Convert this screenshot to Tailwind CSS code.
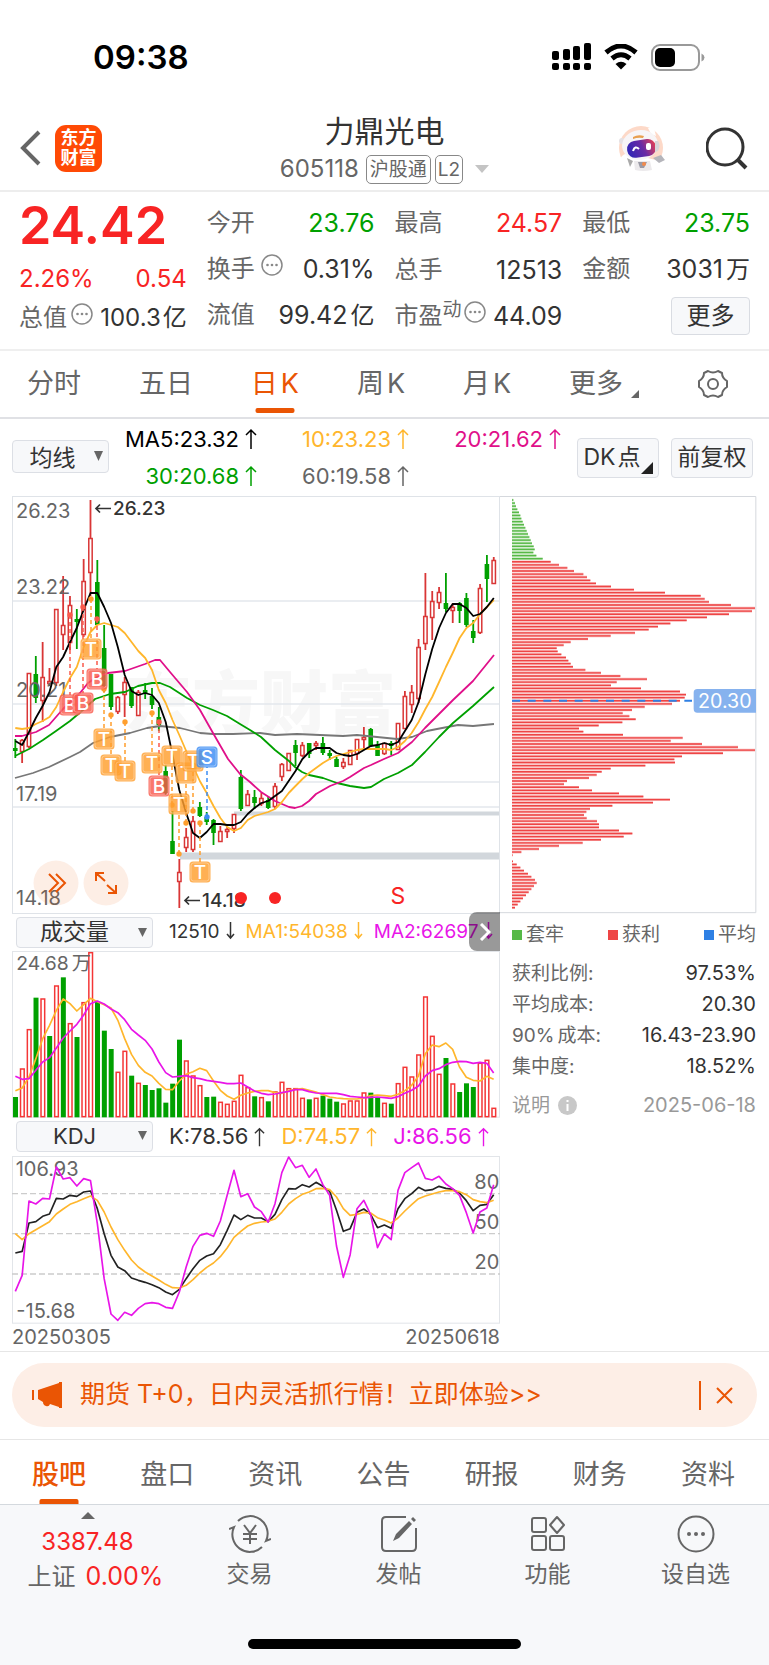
<!DOCTYPE html>
<html lang="zh-CN">
<head>
    <meta charset="UTF-8">
    <meta name="viewport" content="width=device-width, initial-scale=1.0">
    <title>力鼎光电 605118 - 东方财富</title>
    <script src="https://cdn.jsdelivr.net/npm/@tailwindcss/browser@4"></script>
    <style>
        body { font-family: 'Inter', 'Noto Sans CJK SC', sans-serif; }
        select { text-align-last: center; }
    </style>
</head>
<body class="min-h-screen bg-white text-[#333] flex flex-col">

    <!-- Status bar -->
    <div class="h-[106px] pt-2 pl-[93px] pr-[64px] flex items-center justify-between text-black">
        <span class="text-[33px] leading-[40px] font-semibold">09:38</span>
        <div class="flex items-center gap-[13px]">
            <svg class="w-[39px] h-[28px]" viewBox="0 0 39 28">
                <rect x="0" y="8" width="7" height="9" rx="2"/><rect x="11" y="6" width="7" height="11" rx="2"/>
                <rect x="21" y="3" width="7" height="14" rx="2"/><rect x="32" y="0" width="7" height="17" rx="2"/>
                <rect x="0" y="20" width="7" height="7" rx="2"/><rect x="11" y="20" width="7" height="7" rx="2"/>
                <rect x="21" y="20" width="7" height="7" rx="2"/><rect x="32" y="20" width="7" height="7" rx="2"/>
            </svg>
            <svg class="w-[34px] h-[26px]" viewBox="0 0 34 26" fill="none" stroke="#000">
                <path d="M2 8.500Q17 -4.500 32 8.500" stroke-width="5"/>
                <path d="M8 14.500Q17 7 26 14.500" stroke-width="5"/>
                <path d="M17 25.500l-5.500-5.500q5.500-4.500 11 0z" fill="#000" stroke="none"/>
            </svg>
            <svg class="w-[54px] h-[27px]" viewBox="0 0 54 27">
                <rect x="1" y="1" width="47" height="25" rx="8" fill="none" stroke="#999" stroke-width="2"/>
                <rect x="4" y="4" width="20" height="19" rx="5"/>
                <path d="M50.500 9.500q3 1.500 3 4t-3 4z" fill="#999"/>
            </svg>
        </div>
    </div>

    <!-- Header -->
    <header class="h-[84px] px-5 grid grid-cols-[1fr_auto_1fr] items-center">
        <div class="flex items-center gap-[14px]">
            <button type="button" aria-label="返回">
                <svg class="w-[21px] h-[36px]" viewBox="0 0 21 36" fill="none" stroke="#666" stroke-width="4"><path d="M19 2L3 18l16 16"/></svg>
            </button>
            <a href="#" class="w-[47px] h-[47px] rounded-[11px] bg-[#ff4a05] text-white text-[18px] leading-[20px] font-bold text-center flex items-center justify-center"><span>东方<br>财富</span></a>
        </div>
        <div class="flex flex-col items-center">
            <h1 class="text-[30px] leading-[42px]">力鼎光电</h1>
            <div class="flex items-center gap-1 text-[#666]">
                <span class="text-[24px] leading-[34px] pr-[3px]">605118</span>
                <span class="h-[29px] px-[3px] border border-[#888] rounded-[5px] text-[19px] leading-[27px]">沪股通</span>
                <span class="h-[29px] px-[2px] border border-[#888] rounded-[5px] text-[19px] leading-[27px]">L2</span>
                <button type="button" aria-label="切换" class="pl-2"><svg class="w-[14px] h-[8px]" viewBox="0 0 14 8"><path d="M0 0h14L7 8z" fill="#c4c4c4"/></svg></button>
            </div>
        </div>
        <div class="flex items-center justify-end gap-[41px]">
            <button type="button" aria-label="智能助手">
                <svg class="w-[46px] h-[46px]" viewBox="0 0 46 46">
                    <defs><linearGradient id="visor" x1="0" y1=".3" x2="1" y2=".1"><stop offset="0" stop-color="#3527b5"/><stop offset=".5" stop-color="#6a2aa4"/><stop offset="1" stop-color="#f0434e"/></linearGradient></defs>
                    <circle cx="22" cy="23" r="22" fill="#fdd9c8"/>
                    <path d="M8 28q-10 4-5 12l8 6h22l8-10z" fill="#fff"/>
                    <path d="M15 36h16l2 9q-9 2-17 0z" fill="#eceaec"/><path d="M19 37h9l-3 6h-4z" fill="#9a9aa5"/>
                    <circle cx="25" cy="39" r="2" fill="#f28a4c"/><path d="M8 33l6 3-3 6z" fill="#aaa"/>
                    <path d="M34 33l8-3 4 5-6 3z" fill="#b5b5bb"/>
                    <path d="M29 3l6 0 2 8-5-2z" fill="#fff"/><circle cx="3" cy="16" r="3" fill="#e5e1e4"/>
                    <ellipse cx="21" cy="20" rx="18" ry="15" fill="#f7f5f7" transform="rotate(-8 21 20)"/>
                    <path d="M14 12q5-3 11-1l-1 2q-5-1-10 1z" fill="#e8a050"/>
                    <rect x="8" y="15" width="29" height="17" rx="8" fill="url(#visor)" transform="rotate(-8 22 23)"/>
                    <path d="M14 26q2-6 6-2" fill="none" stroke="#fff" stroke-width="2"/><rect x="27" y="18" width="5" height="7" rx="2" fill="#fff"/>
                    <path d="M39 16q3 4 0 10l-3 1V16z" fill="#d8d5d9"/>
                </svg>
            </button>
            <button type="button" aria-label="搜索">
                <svg class="w-[43px] h-[43px]" viewBox="0 0 43 43" fill="none" stroke="#333" stroke-width="3"><circle cx="19" cy="20" r="18"/><path d="M31 32l9 9" stroke-width="4"/></svg>
            </button>
        </div>
    </header>

    <!-- Quote -->
    <section class="h-[159px] px-[19px] pt-2 pb-[10px] border-t-2 border-[#ededed] grid grid-cols-4 gap-x-5 text-[24px] text-[#333]">
        <div class="flex flex-col justify-between">
            <div class="text-[52px] leading-[52px] font-semibold text-[#f82424]">24.42</div>
            <div class="flex justify-between pt-2 leading-[36px] text-[#f82424]"><span>2.26%</span><span>0.54</span></div>
            <div class="flex justify-between items-center leading-[42px] whitespace-nowrap"><span class="flex items-center gap-1 text-[#666]">总值<svg class="w-[22px] h-[22px] mb-2" viewBox="0 0 22 22"><circle cx="11" cy="11" r="10" fill="none" stroke="#888" stroke-width="1.500"/><g fill="#888"><circle cx="6.500" cy="11" r="1.300"/><circle cx="11" cy="11" r="1.300"/><circle cx="15.500" cy="11" r="1.300"/></g></svg></span><span>100.3<span class="ml-[2px]">亿</span></span></div>
        </div>
        <div class="flex flex-col justify-between leading-[46px]">
            <div class="flex justify-between"><span class="text-[#666]">今开</span><span class="text-[25px] text-[#00a000]">23.76</span></div>
            <div class="flex justify-between"><span class="flex items-center gap-[6px] text-[#666]">换手<svg class="w-[22px] h-[22px] mb-2" viewBox="0 0 22 22"><circle cx="11" cy="11" r="10" fill="none" stroke="#888" stroke-width="1.500"/><g fill="#888"><circle cx="6.500" cy="11" r="1.300"/><circle cx="11" cy="11" r="1.300"/><circle cx="15.500" cy="11" r="1.300"/></g></svg></span><span class="text-[25px]">0.31%</span></div>
            <div class="flex justify-between"><span class="text-[#666]">流值</span><span class="text-[25px]">99.42<span class="ml-[3px] text-[24px]">亿</span></span></div>
        </div>
        <div class="flex flex-col justify-between leading-[46px]">
            <div class="flex justify-between"><span class="text-[#666]">最高</span><span class="text-[25px] text-[#f82424]">24.57</span></div>
            <div class="flex justify-between"><span class="text-[#666]">总手</span><span class="text-[25px]">12513</span></div>
            <div class="flex justify-between whitespace-nowrap"><span class="flex items-center text-[#666]">市盈<span class="text-[19px] leading-[24px] mb-3">动</span><svg class="w-[22px] h-[22px] mb-2 ml-[2px]" viewBox="0 0 22 22"><circle cx="11" cy="11" r="10" fill="none" stroke="#888" stroke-width="1.500"/><g fill="#888"><circle cx="6.500" cy="11" r="1.300"/><circle cx="11" cy="11" r="1.300"/><circle cx="15.500" cy="11" r="1.300"/></g></svg></span><span class="text-[25px]">44.09</span></div>
        </div>
        <div class="flex flex-col justify-between leading-[46px]">
            <div class="flex justify-between"><span class="text-[#666]">最低</span><span class="text-[25px] text-[#00a000]">23.75</span></div>
            <div class="flex justify-between"><span class="text-[#666]">金额</span><span class="text-[25px]">3031<span class="ml-[3px] text-[24px]">万</span></span></div>
            <div class="flex justify-end items-center h-[46px]"><button type="button" class="w-[79px] h-[38px] border border-[#d9dce2] rounded-[4px] bg-[#f7f8fa] leading-[34px]">更多</button></div>
        </div>
    </section>

    <!-- Period tabs -->
    <nav class="h-[70px] pl-[27px] pr-10 border-t-2 border-b-2 border-t-[#efefef] border-b-[#e0e1e5] flex items-stretch justify-between text-[27px] leading-[66px] text-[#666]">
        <a href="#">分时</a>
        <a href="#">五日</a>
        <a href="#" class="relative text-[#ea5504]">日<span class="ml-[3px]">K</span><i class="absolute left-1/2 -translate-x-1/2 bottom-1 w-[39px] h-[5px] rounded-[2px] bg-[#ea5504]"></i></a>
        <a href="#">周<span class="ml-[3px]">K</span></a>
        <a href="#">月<span class="ml-[3px]">K</span></a>
        <a href="#" class="flex items-center gap-2">更多<svg class="w-[8px] h-[8px] mt-5" viewBox="0 0 8 8"><path d="M8 0v8H0z" fill="#666"/></svg></a>
        <button type="button" aria-label="设置">
            <svg class="w-[32px] h-[32px]" viewBox="0 0 32 32" fill="none" stroke="#666" stroke-width="2" stroke-linejoin="round"><path d="M11 3Q16 6 21 3L25 5Q25 10 30 13V19Q25 22 25 27L21 29Q16 26 11 29L7 27Q7 22 2 19V13Q7 10 7 5Z"/><circle cx="16" cy="16" r="5"/></svg>
        </button>
    </nav>

    <!-- Moving averages -->
    <div class="h-[77px] mx-3 flex items-center justify-between text-[23px] whitespace-nowrap">
        <div class="relative">
            <select aria-label="主图指标" class="appearance-none w-[97px] h-[33px] pl-1 pr-5 border border-[#dcdfe5] rounded-[4px] bg-[#f7f8fa]"><option>均线</option></select>
            <svg class="absolute right-[6px] top-[11px] w-[9px] h-[10px] pointer-events-none" viewBox="0 0 9 10"><path d="M0 0h9L4.500 10z" fill="#666"/></svg>
        </div>
        <div class="grid grid-cols-[auto_152px_152px] text-right text-[22px] leading-[37px]">
            <span class="text-black">MA5:23.32<svg class="inline w-[12px] h-[21px] ml-[6px] mb-1" viewBox="0 0 12 21" fill="none" stroke="currentColor" stroke-width="1.500"><path d="M6 21V2M1 7l5-5 5 5"/></svg></span>
            <span class="text-[#ffb62c]">10:23.23<svg class="inline w-[12px] h-[21px] ml-[6px] mb-1" viewBox="0 0 12 21" fill="none" stroke="currentColor" stroke-width="1.500"><path d="M6 21V2M1 7l5-5 5 5"/></svg></span>
            <span class="text-[#e0108a]">20:21.62<svg class="inline w-[12px] h-[21px] ml-[6px] mb-1" viewBox="0 0 12 21" fill="none" stroke="currentColor" stroke-width="1.500"><path d="M6 21V2M1 7l5-5 5 5"/></svg></span>
            <span class="text-[#00a000]">30:20.68<svg class="inline w-[12px] h-[21px] ml-[6px] mb-1" viewBox="0 0 12 21" fill="none" stroke="currentColor" stroke-width="1.500"><path d="M6 21V2M1 7l5-5 5 5"/></svg></span>
            <span class="text-[#666]">60:19.58<svg class="inline w-[12px] h-[21px] ml-[6px] mb-1" viewBox="0 0 12 21" fill="none" stroke="currentColor" stroke-width="1.500"><path d="M6 21V2M1 7l5-5 5 5"/></svg></span>
        </div>
        <div class="flex gap-3 pr-1">
            <button type="button" class="relative w-[82px] h-[40px] pr-3 border border-[#dcdfe5] rounded-[4px] bg-[#f7f8fa]">DK<span class="ml-[2px]">点</span><svg class="absolute right-[5px] bottom-[3px] w-[12px] h-[12px]" viewBox="0 0 12 12"><path d="M12 0v12H0z" fill="#222"/></svg></button>
            <button type="button" class="w-[82px] h-[40px] border border-[#dcdfe5] rounded-[4px] bg-[#f7f8fa]">前复权</button>
        </div>
    </div>

    <main class="mx-3 grid grid-cols-[488fr_257fr]">
        <div class="min-w-0">
            <!-- Candles, 488 x 418 -->
            <svg id="kline" class="block w-full h-auto" viewBox="0 0 488 418"></svg>

            <div class="h-[37px] relative pl-1 flex items-center text-[19px] whitespace-nowrap">
                <div class="relative mr-4">
                    <select aria-label="副图一指标" class="appearance-none w-[137px] h-[31px] pl-1 pr-6 border border-[#dcdfe5] rounded-[4px] bg-[#f7f8fa] text-[23px] leading-[28px]"><option>成交量</option></select>
                    <svg class="absolute right-[6px] top-[11px] w-[9px] h-[9px] pointer-events-none" viewBox="0 0 9 9"><path d="M0 0h9L4.500 9z" fill="#666"/></svg>
                </div>
                <span class="mr-[11px]">12510<svg class="inline w-[9px] h-[18px] ml-[6px] mb-1" viewBox="0 0 9 18" fill="none" stroke="currentColor" stroke-width="1.500"><path d="M4.500 0v16M1 12l3.500 4L8 12"/></svg></span>
                <span class="mr-[11px] text-[#ffb62c]">MA1:54038<svg class="inline w-[9px] h-[18px] ml-[6px] mb-1" viewBox="0 0 9 18" fill="none" stroke="currentColor" stroke-width="1.500"><path d="M4.500 0v16M1 12l3.500 4L8 12"/></svg></span>
                <span class="text-[#e815e8]">MA2:62697<svg class="inline w-[9px] h-[18px] ml-[6px] mb-1" viewBox="0 0 9 18" fill="none" stroke="currentColor" stroke-width="1.500"><path d="M4.500 0v16M1 12l3.500 4L8 12"/></svg></span>
                <button type="button" aria-label="展开" class="absolute right-0 -top-[2px] w-[31px] h-[39px] rounded-l-[8px] bg-black/40 flex items-center justify-center">
                    <svg class="w-[12px] h-[18px]" viewBox="0 0 12 18" fill="none" stroke="#fff" stroke-width="3"><path d="M2 1l8 8-8 8"/></svg>
                </button>
            </div>
            <svg id="volume" class="block w-full h-auto" viewBox="36 122 1464 500"></svg>

            <div class="h-[38px] pl-1 flex items-center text-[22px] whitespace-nowrap">
                <div class="relative mr-4">
                    <select aria-label="副图二指标" class="appearance-none w-[137px] h-[31px] pl-1 pr-6 border border-[#dcdfe5] rounded-[4px] bg-[#f7f8fa] leading-[28px]"><option>KDJ</option></select>
                    <svg class="absolute right-[6px] top-[11px] w-[9px] h-[9px] pointer-events-none" viewBox="0 0 9 9"><path d="M0 0h9L4.500 9z" fill="#666"/></svg>
                </div>
                <span class="mr-4">K:78.56<svg class="inline w-[11px] h-[21px] ml-[6px] mb-1" viewBox="0 0 12 21" fill="none" stroke="currentColor" stroke-width="1.500"><path d="M6 21V2M1 7l5-5 5 5"/></svg></span>
                <span class="mr-4 text-[#ffb62c]">D:74.57<svg class="inline w-[11px] h-[21px] ml-[6px] mb-1" viewBox="0 0 12 21" fill="none" stroke="currentColor" stroke-width="1.500"><path d="M6 21V2M1 7l5-5 5 5"/></svg></span>
                <span class="text-[#e815e8]">J:86.56<svg class="inline w-[11px] h-[21px] ml-[6px] mb-1" viewBox="0 0 12 21" fill="none" stroke="currentColor" stroke-width="1.500"><path d="M6 21V2M1 7l5-5 5 5"/></svg></span>
            </div>
            <svg id="kdj" class="block w-full h-auto" viewBox="36 122 1464 504"></svg>
            <div class="h-[27px] flex justify-between items-center text-[20px] leading-[24px] text-[#666]"><span>20250305</span><span>20250618</span></div>
        </div>

        <aside class="min-w-0">
            <!-- Chip distribution -->
            <svg id="chips" class="block w-full h-auto" viewBox="0 18 771 1254"></svg>
            <div class="pl-3 pr-[1px] pt-[3px] text-[19px] text-[#666]">
                <ul class="h-[36px] flex justify-between items-center">
                    <li class="flex items-center gap-1"><i class="w-[10px] h-[10px] bg-[#57b947]"></i>套牢</li>
                    <li class="flex items-center gap-1"><i class="w-[10px] h-[10px] bg-[#ee4545]"></i>获利</li>
                    <li class="flex items-center gap-1"><i class="w-[10px] h-[10px] bg-[#2f80e4]"></i>平均</li>
                </ul>
                <dl class="pt-[5px] grid grid-cols-[auto_1fr] leading-[31px] whitespace-nowrap">
                    <dt>获利比例:</dt><dd class="text-right text-[20px] text-[#333]">97.53%</dd>
                    <dt>平均成本:</dt><dd class="text-right text-[20px] text-[#333]">20.30</dd>
                    <dt>90%<span class="ml-[3px]">成本:</span></dt><dd class="text-right text-[20px] text-[#333]">16.43-23.90</dd>
                    <dt>集中度:</dt><dd class="text-right text-[20px] text-[#333]">18.52%</dd>
                </dl>
                <div class="pt-2 flex justify-between leading-[31px] text-[#999]">
                    <a href="#" class="flex items-center gap-2">说明<svg class="w-[19px] h-[19px]" viewBox="0 0 19 19"><circle cx="9.500" cy="9.500" r="9.500" fill="#c8c8c8"/><path d="M8.500 4h2v2h-2zM8.500 8h2v7h-2z" fill="#fff"/></svg></a>
                    <span class="text-[20px]">2025-06-18</span>
                </div>
            </div>
        </aside>
    </main>

    <!-- Promo -->
    <div class="h-[89px] px-3 border-t border-b border-[#e6e6e6] flex items-center">
        <div class="w-full h-[64px] pl-5 pr-6 rounded-full bg-[#fdeee6] text-[#ea5504] text-[25px] flex items-center justify-between">
            <a href="#" class="flex items-center gap-[18px]">
                <svg class="w-[30px] h-[26px]" viewBox="0 0 30 26" fill="#ea5504"><path d="M0 8h2v10H0zM6 8L27 1V0h3v26h-3v-1l-9-3q-1 3-4 2t-3-4l-5-3z"/></svg>
                <span>期货 T+0，日内灵活抓行情！立即体验&gt;&gt;</span>
            </a>
            <div class="flex items-center gap-[15px]">
                <i class="w-[2px] h-[29px] bg-[#ea5504]"></i>
                <button type="button" aria-label="关闭"><svg class="w-[17px] h-[17px]" viewBox="0 0 17 17" fill="none" stroke="#ea5504" stroke-width="2"><path d="M1 1l15 15M16 1L1 16"/></svg></button>
            </div>
        </div>
    </div>

    <!-- Content tabs -->
    <nav class="h-[64px] pl-8 pr-[34px] flex justify-between text-[27px] leading-[70px] text-[#666]">
        <a href="#" class="relative text-[#ea5504] font-medium">股吧<i class="absolute left-1/2 -translate-x-1/2 bottom-0 w-[39px] h-[5px] rounded-t-[2px] bg-[#ea5504]"></i></a>
        <a href="#">盘口</a>
        <a href="#">资讯</a>
        <a href="#">公告</a>
        <a href="#">研报</a>
        <a href="#">财务</a>
        <a href="#">资料</a>
    </nav>

    <!-- Bottom bar -->
    <footer class="grow border-t border-[#d4d9de] bg-[#f7f8fa] flex flex-col justify-between text-[23px] text-[#666]">
        <div class="grid grid-cols-[175fr_149fr_149fr_149fr_147fr] text-center">
            <a href="#" class="pt-[7px] leading-[35px]">
                <svg class="block mx-auto w-[14px] h-[7px]" viewBox="0 0 14 7"><path d="M7 0l7 7H0z" fill="#666"/></svg>
                <span class="block mt-[5px] text-[24px] text-[#f82424]">3387.48</span>
                <span class="block pl-4 text-[24px]">上证<span class="ml-[10px] text-[25px] text-[#f82424]">0.00%</span></span>
            </a>
            <a href="#" class="pt-[10px] leading-[38px]">
                <svg class="block mx-auto w-[42px] h-[38px] mb-[2px]" viewBox="0 0 42 38" fill="none" stroke="#666" stroke-width="2"><path d="M9 6A17.500 17.500 0 0 1 37 26l5-2M33 32A17.500 17.500 0 0 1 5 12l-5 2"/><path d="M15 10l6 8 6-8M14 19h14M14 24h14M21 18v11"/></svg>交易</a>
            <a href="#" class="pt-[10px] leading-[38px]">
                <svg class="block mx-auto w-[36px] h-[38px] mb-[2px]" viewBox="0 0 36 38" fill="none" stroke="#666" stroke-width="2"><path d="M25 2H5Q1 2 1 6v26q0 4 4 4h26q4 0 4-4V13"/><path d="M12 26l3-7L28 6l3 3-13 14zM30 4l2-2 3 3-2 2z" fill="#666" stroke="none"/></svg>发帖</a>
            <a href="#" class="pt-[10px] leading-[38px]">
                <svg class="block mx-auto w-[34px] h-[38px] mb-[2px]" viewBox="0 0 34 38" fill="none" stroke="#666" stroke-width="2"><rect x="1" y="3" width="14" height="14" rx="2"/><rect x="1" y="21" width="14" height="14" rx="2"/><rect x="19" y="21" width="14" height="14" rx="2"/><path d="M26 2l7 8-7 8-7-8z" stroke-linejoin="round"/></svg>功能</a>
            <a href="#" class="pt-[10px] leading-[38px]">
                <svg class="block mx-auto w-[38px] h-[38px] mb-[2px]" viewBox="0 0 38 38" fill="none" stroke="#666" stroke-width="2"><circle cx="19" cy="19" r="17.500"/><g fill="#666" stroke="none"><circle cx="12" cy="19" r="2"/><circle cx="19" cy="19" r="2"/><circle cx="26" cy="19" r="2"/></g></svg>设自选</a>
        </div>
        <div class="mx-auto mb-4 w-[273px] h-[10px] rounded-full bg-black"></div>
    </footer>

    <script>
        const RED = '#d93636', GREEN = '#00a000', ORANGE = '#ffb62c', PINK = '#e0108a', PURPLE = '#e815e8';

        // [direction, high, body top, body bottom, low]
        const candles = [
            ['g',243,252,255,262],['r',243,244,256,267],['r',177,177,251,252],['g',160,178,202,207],['r',146,181,205,226],['r',172,185,188,190],
            ['r',113,113,187,190],['r',80,129,139,154],['r',100,109,147,154],['g',113,123,126,153],['r',63,85,139,141],['r',4,42,77,100],
            ['g',64,86,129,129],['g',129,152,190,196],['g',178,178,211,214],['r',200,201,216,218],['r',181,186,199,221],['g',191,191,210,212],
            ['r',194,196,220,220],['g',187,194,197,203],['g',192,200,209,213],['g',211,221,229,235],['g',269,275,297,299],['g',315,345,358,358],
            ['r',363,376,386,412],['r',332,341,352,356],['r',320,325,354,356],['g',306,311,320,321],['g',316,321,326,329],['g',323,324,337,349],
            ['r',330,335,346,346],['r',331,333,336,342],['r',318,318,333,337],['g',274,281,313,315],['r',294,298,310,310],['g',294,301,307,313],
            ['r',297,302,308,310],['g',300,304,312,313],['r',287,290,311,313],['r',267,268,281,285],['r',257,257,275,275],['g',244,249,257,270],
            ['r',246,249,260,261],['g',247,247,258,262],['r',245,247,250,254],['g',241,247,257,259],['g',254,257,260,264],['g',261,263,271,271],
            ['r',262,266,271,273],['r',254,254,269,269],['r',243,243,258,264],['r',231,241,244,254],['g',232,233,250,251],['g',245,249,260,260],
            ['r',247,247,258,259],['g',245,247,250,259],['r',227,227,254,254],['r',195,200,233,233],['r',189,196,209,217],['r',143,151,203,207],
            ['r',77,120,148,154],['r',95,105,122,144],['r',91,96,107,113],['g',77,107,113,116],['r',107,111,115,127],['g',106,107,115,127],
            ['g',97,102,129,131],['g',124,135,142,147],['r',88,92,137,138],['g',59,68,83,106],['r',61,64,88,88]
        ];
        const ma5 = [245,249,236,222,210,196,171,161,146,132,114,97,97,111,127,151,179,195,199,197,199,207,226,259,294,317,337,342,336,328,328,329,329,326,318,312,307,305,300,295,285,275,263,256,252,252,252,257,259,260,258,254,250,249,247,249,246,235,224,206,178,153,132,117,108,108,112,120,118,111,102];
        const ma10 = [232,233,232,228,225,221,211,196,182,171,151,136,129,127,129,131,137,146,155,162,174,194,207,224,239,255,270,285,297,310,322,331,335,332,324,320,318,316,313,306,297,290,283,277,272,267,263,260,258,256,254,253,253,253,253,254,251,245,237,226,213,201,186,171,157,142,132,127,118,111,104];
        const ma20 = '3,240 10,240 24,236 37,229 44,221 51,213 60,204 68,197 76,187 85,181 96,177 113,175 133,168 143,164 148,164 158,176 175,196 188,214 201,237 216,263 228,278 238,286 249,296 263,305 277,311 283,312 290,310 297,305 304,298 318,290 331,285 338,281 352,272 359,269 372,263 386,257 400,246 413,232 427,218 441,204 461,185 482,159';
        const ma30 = '3,260 17,253 31,244 44,235 58,225 71,214 83,203 98,198 113,196 126,190 140,187 148,187 158,191 175,202 188,209 201,214 215,220 228,228 238,234 249,241 263,254 277,265 283,271 290,276 297,279 311,282 325,287 338,290 352,292 359,291 372,283 386,277 400,269 413,256 427,241 441,227 461,210 482,191';
        const ma60 = '3,282 21,277 37,271 58,261 68,256 81,247 98,241 118,237 135,232 148,230 168,232 188,237 201,238 221,238 248,237 263,239 285,238 331,240 345,239 365,241 385,243 400,241 415,235 425,233 446,229 461,230 482,228';

        // trade marks: [label, x, y, dot y]
        const marks = [
            ['T',79,153,103],['B',85,183,123],['B',58,209,119],['B',71,207,111],['T',92,243,193],['T',99,269,219],['T',113,275,226],
            ['T',140,267,217],['B',147,290,226],['T',160,260,309],['T',174,277,327],['T',181,265,315],['T',167,308,358],['S',195,261,321],['T',188,376,327]
        ];
        const markColor = { T: '#ff9f2e', B: '#fa5a4c', S: '#3d8df5' };

        // lower panes are plotted at 3x, one column every 20.5 units
        const volume = 'g560 r474 r356 g262 r264 g377 r225 g201 r338 g380 r275 r125 g275 g361 g416 r484 r421 g496 r517 g524 g539 g534 g577 g520 g388 r450 r495 r524 g560 g559 r574 r580 r571 r493 r530 g558 r560 g573 r543 r514 r533 r533 r562 g567 r562 g556 g565 g574 r579 r570 r570 r546 g547 g561 r577 g580 r518 r469 r498 r432 r258 r376 r490 g443 r519 g545 g519 g530 r457 r448 r592'.split(' ');
        const volMa1 = [541,533,500,445,385,345,300,266,280,302,283,264,274,283,293,330,385,432,465,486,497,519,537,538,512,492,484,474,481,512,540,557,567,555,548,543,541,541,547,549,541,537,535,540,545,553,560,563,565,566,566,563,556,554,556,558,552,541,525,497,430,404,409,398,417,470,501,510,512,498,507];
        const volMa2 = [498,507,505,480,455,442,413,383,362,342,314,280,272,281,296,307,328,357,374,390,416,455,487,500,498,496,502,505,510,513,516,520,520,518,530,542,549,553,551,547,543,538,538,544,548,549,549,549,553,558,560,562,561,560,562,564,559,549,540,527,497,481,475,463,456,453,454,459,456,459,488];
        const k = [413,408,323,319,303,296,249,251,240,243,230,227,280,355,420,455,466,488,495,501,508,517,530,538,522,490,460,435,422,415,388,345,299,313,300,308,308,319,297,253,220,221,208,215,201,213,228,285,348,340,291,281,297,337,329,339,280,250,235,216,226,223,213,219,222,233,256,286,270,267,238];
        const d = [355,373,355,343,331,319,296,281,267,259,250,242,255,290,335,373,405,434,455,470,482,494,507,517,518,510,493,473,456,443,424,398,366,348,332,324,320,318,311,291,266,250,237,230,220,219,223,245,280,300,297,291,293,307,314,323,308,287,268,250,242,236,230,226,226,229,238,253,259,262,255];
        const j = [528,480,257,266,249,251,155,191,187,212,190,196,325,490,596,615,591,600,579,565,562,565,576,579,530,455,393,360,354,363,317,240,165,244,235,275,289,320,265,172,125,157,150,186,161,208,240,392,486,418,280,255,298,397,356,373,225,172,157,143,189,194,183,206,220,240,292,353,290,278,208];
        const chips = [40,45,48,52,57,61,64,68,72,76,80,84,88,92,96,101,104,100,109,128,152,177,202,222,250,261,271,288,333,402,495,602,614,627,693,765,756,687,621,560,511,474,446,405,332,264,212,191,170,173,184,198,205,212,219,256,303,361,441,350,333,423,540,558,554,540,516,434,396,368,388,407,367,296,237,250,369,548,512,606,714,765,669,546,523,525,436,332,305,290,267,201,192,237,276,357,430,510,459,337,270,259,252,260,291,297,297,357,397,371,303,248,177,117,64,38,36,39,50,61,72,84,94,105,110,102,94,86,78,69,61,53,45];

        const line = (pts, color, w) => `<polyline points="${pts}" fill="none" stroke="${color}" stroke-width="${w}" stroke-linejoin="round"/>`;
        const series = (values, x0, step) => values.map((v, i) => `${(x0 + step * i).toFixed(1)},${v}`).join(' ');

        function drawKline() {
            let s = `<text x="112" y="232" font-size="68" font-weight="900" fill="#f7f7f7">东方财富</text>`;
            s += `<path d="M0 105H488M0 208H488M0 311H488M232 286H488" stroke="#e4e8ed" stroke-width="1.500"/>`;
            s += `<path d="M222 317.500H488" stroke="#d2d7dc" stroke-width="4"/><path d="M168 360H488" stroke="#d2d7dc" stroke-width="7"/>`;
            candles.forEach(([dir, hi, top, bot, lo], i) => {
                const x = 3.3 + 6.835 * i;
                if (dir === 'g') {
                    s += `<path d="M${x} ${hi}V${lo}" stroke="${GREEN}" stroke-width="1.800"/><rect x="${x - 2.3}" y="${top}" width="4.600" height="${bot - top}" fill="${GREEN}"/>`;
                } else {
                    s += `<path d="M${x} ${hi}V${top}M${x} ${bot}V${lo}" stroke="${RED}" stroke-width="1.800"/><rect x="${x - 1.7}" y="${top + .5}" width="3.400" height="${Math.max(bot - top - 1, 1)}" fill="#fff" stroke="${RED}" stroke-width="1.500"/>`;
                }
            });
            s += `<g font-size="20" fill="#666"><text x="4" y="22">26.23</text><text x="4" y="98">23.22</text><text x="4" y="201">20.21</text><text x="4" y="305">17.19</text><text x="4" y="409">14.18</text></g>`;
            s += line(ma60, '#777', 1.8) + line(ma30, GREEN, 1.8) + line(ma20, PINK, 1.8);
            s += line(series(ma10, 3.3, 6.835), ORANGE, 1.8) + line(series(ma5, 3.3, 6.835), '#000', 1.8);
            marks.forEach(([t, x, y, dot]) => {
                const c = markColor[t];
                s += `<path d="M${x} ${dot}V${y + (dot > y ? 10 : -10)}" stroke="${c}" stroke-width="1.500" stroke-dasharray="4 3"/><circle cx="${x}" cy="${dot}" r="2.700" fill="${c}"/>`;
            });
            marks.forEach(([t, x, y]) => {
                s += `<g opacity=".82"><rect x="${x - 10.5}" y="${y - 10.5}" width="21" height="21" rx="3.500" fill="${markColor[t]}"/><rect x="${x - 9}" y="${y - 9}" width="18" height="18" rx="2.500" fill="none" stroke="#fff" stroke-opacity=".35"/></g><text x="${x}" y="${y + 7}" font-size="19" font-weight="500" fill="#fff" text-anchor="middle">${t}</text>`;
            });
            s += `<g font-size="19" font-weight="500" fill="#333"><text x="101" y="19">26.23</text><text x="190" y="411">14.18</text></g>`;
            s += `<path d="M84 12.500H99M88 8.500l-4 4 4 4M173 404.500H188M177 400.500l-4 4 4 4" fill="none" stroke="#333" stroke-width="1.700"/>`;
            s += `<circle cx="229" cy="402" r="6" fill="#f82424"/><circle cx="263" cy="402" r="6" fill="#f82424"/><text x="386" y="408" font-size="23" fill="#f82424" text-anchor="middle">S</text>`;
            s += `<circle cx="44" cy="387" r="22.500" fill="#ea5504" fill-opacity=".1"/><circle cx="94" cy="387" r="22.500" fill="#ea5504" fill-opacity=".1"/>`;
            s += `<path d="M37 378l9 9-9 9M44 378l9 9-9 9M84 385v-8h8M84 377l9 8M104 389v8h-8M104 397l-9-8" fill="none" stroke="#ea5504" stroke-width="2"/>`;
            s += `<rect x=".5" y=".5" width="487" height="417" fill="none" stroke="#dfe3e8"/>`;
            document.getElementById('kline').innerHTML = s;
        }

        function drawVolume() {
            let s = `<rect x="37.500" y="123.500" width="1461" height="497" fill="none" stroke="#e2e5e9" stroke-width="3"/>`;
            volume.forEach((v, i) => {
                const x = 46 + 20.5 * i, top = +v.slice(1);
                s += v[0] === 'g'
                    ? `<rect x="${x - 7}" y="${top}" width="15" height="${621 - top}" fill="${GREEN}"/>`
                    : `<rect x="${x - 5}" y="${top + 2}" width="11" height="${617 - top}" fill="#fff" stroke="#f43636" stroke-width="4.500"/>`;
            });
            s += `<text x="49" y="180" font-size="58" fill="#666">24.68<tspan dx="9">万</tspan></text>`;
            s += line(series(volMa1, 46, 20.5), ORANGE, 5) + line(series(volMa2, 46, 20.5), PURPLE, 5);
            document.getElementById('volume').innerHTML = s;
        }

        function drawKdj() {
            let s = `<rect x="37.500" y="123.500" width="1461" height="500" fill="none" stroke="#e2e5e9" stroke-width="3"/>`;
            s += `<path d="M36 235H1500M36 355H1500M36 476H1500" stroke="#ccc" stroke-width="4" stroke-dasharray="18 9"/>`;
            s += `<g font-size="60" fill="#666"><text x="47" y="181">106.93</text><text x="49" y="608">-15.68</text><g text-anchor="end"><text x="1498" y="222">80</text><text x="1498" y="342">50</text><text x="1498" y="462">20</text></g></g>`;
            s += line(series(k, 46, 20.5), '#222', 5) + line(series(d, 46, 20.5), ORANGE, 5) + line(series(j, 46, 20.5), PURPLE, 5);
            document.getElementById('kdj').innerHTML = s;
        }

        function drawChips() {
            let s = `<path d="M0 19.500H767.500V1268H0" fill="none" stroke="#d5d8dd" stroke-width="3"/>`;
            const step = 1223 / (chips.length - 1);
            chips.forEach((x, i) => {
                const y = (30 + step * i).toFixed(1);
                const c = i < 20 ? '#57b947' : '#ee4545';
                s += `<path d="M36 ${y}H${x}" stroke="${c}" stroke-width="8" stroke-opacity=".4"/><path d="M36 ${y}H${x}" stroke="${c}" stroke-width="4"/>`;
            });
            s += `<path d="M36 632H576" stroke="#2f80e4" stroke-width="6" stroke-dasharray="24 23"/>`;
            s += `<path d="M592 597H768V668H592Q581 668 581 657V608Q581 597 592 597Z" fill="#86b2ee"/><text x="594" y="654" font-size="59" fill="#fff">20.30</text>`;
            document.getElementById('chips').innerHTML = s;
        }

        drawKline();
        drawVolume();
        drawKdj();
        drawChips();
    </script>
</body>
</html>
